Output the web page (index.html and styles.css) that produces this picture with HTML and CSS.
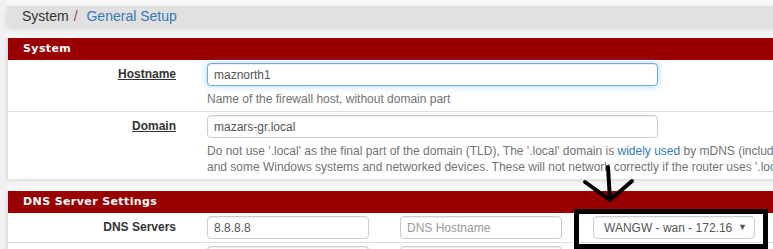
FILE: index.html
```html
<!DOCTYPE html>
<html lang="en">
<head>
  <meta charset="UTF-8" />
  <meta name="viewport" content="width=device-width, initial-scale=1.0"/>
  <title>System / General Setup</title>
  <link rel="stylesheet" href="styles.css">
</head>
<body>
  <div class="page">
    <div class="breadcrumb">
      <span class="crumb">System</span><span class="sep">/&nbsp;</span><a class="crumb-link" href="#">General Setup</a>
    </div>

    <div class="panel">
      <div class="panel-heading">System</div>
      <div class="form-row">
        <label class="form-label" for="hostname"><span class="label-link">Hostname</span></label>
        <div class="form-field">
          <input type="text" id="hostname" class="form-input is-focused" value="maznorth1">
          <p class="help">Name of the firewall host, without domain part</p>
        </div>
      </div>
      <div class="form-row">
        <label class="form-label" for="domain"><span class="label-link">Domain</span></label>
        <div class="form-field">
          <input type="text" id="domain" class="form-input" value="mazars-gr.local">
          <p class="help">Do not use '.local' as the final part of the domain (TLD), The '.local' domain is <a href="#">widely used</a> by mDNS (including avahi and Apple OS X's Bonjour/Rendezvous/Airprint/Airplay),<br>and some Windows systems and networked devices. These will not network correctly if the router uses '.local'. Alternatives such as '.home.arpa', '.local.lan', or '.mylocal' are safer.</p>
        </div>
      </div>
    </div>

    <div class="panel">
      <div class="panel-heading">DNS Server Settings</div>
      <div class="form-row dns-row">
        <label class="form-label">DNS Servers</label>
        <input type="text" class="form-input" value="8.8.8.8">
        <input type="text" class="form-input" placeholder="DNS Hostname">
        <div class="select-wrap">
          <select class="form-input form-select">
            <option>WANGW - wan - 172.16</option>
          </select>
        </div>
      </div>
      <div class="form-row dns-row">
        <label class="form-label"></label>
        <input type="text" class="form-input">
        <input type="text" class="form-input" placeholder="DNS Hostname">
        <div class="select-wrap">
          <select class="form-input form-select">
            <option>none</option>
          </select>
        </div>
      </div>
    </div>
  </div>

  <svg class="annotation" width="773" height="249" viewBox="0 0 773 249">
    <g fill="none" stroke="#000" stroke-width="4" stroke-linecap="round" stroke-linejoin="round">
      <path d="M608 167 L610 200"/>
      <path d="M585 182 L610 200 L632 181"/>
    </g>
    <rect x="576.5" y="211.5" width="189" height="35" fill="none" stroke="#000" stroke-width="5"/>
  </svg>
</body>
</html>
```

FILE: styles.css
```css
* { box-sizing: border-box; margin: 0; padding: 0; }
html, body { overflow: hidden; }
body {
  background: #f1f1f1;
  font-family: "Liberation Sans", Arial, sans-serif;
  color: #333;
  width: 773px;
  height: 249px;
  position: relative;
}
.page {
  width: 1000px;
  margin-left: 7px;
  padding-top: 6px;
  background: #f8f8f8;
  min-height: 249px;
}

/* breadcrumb bar */
.breadcrumb {
  background: #e0e0e0;
  height: 21px;
  line-height: 21px;
  padding-left: 15px;
  font-size: 14px;
  box-shadow: 0 3px 6px rgba(0,0,0,0.12);
  margin-bottom: 11px;
}
.crumb { color: #333; }
.sep { color: #a0403f; padding: 0 5px; }
.crumb-link { color: #337ab7; text-decoration: none; }

/* panels */
.panel {
  background: #fff;
  border-left: 1px solid #ddd;
  box-shadow: 0 2px 5px rgba(0,0,0,0.12);
  margin-bottom: 12px;
}
.panel-heading {
  background: #990000;
  color: #fff;
  height: 22px;
  line-height: 22px;
  padding-left: 15px;
  font-family: "DejaVu Sans", Verdana, sans-serif;
  font-weight: bold;
  font-size: 11px;
  letter-spacing: 0.4px;
}

/* form rows */
.form-row {
  display: grid;
  grid-template-columns: 168px 1fr;
  column-gap: 31px;
  align-items: start;
  padding: 3px 0 4px;
}
.form-row + .form-row { border-top: 1px solid #ddd; }
.form-label {
  text-align: right;
  font-size: 12px;
  font-weight: bold;
  line-height: 23px;
  color: #333;
}
.label-link { text-decoration: underline; }

.form-input {
  display: block;
  width: 451px;
  height: 23px;
  padding: 0 6px;
  font-family: "Liberation Sans", Arial, sans-serif;
  font-size: 12px;
  color: #555;
  background: #fff;
  border: 1px solid #ccc;
  border-radius: 4px;
  box-shadow: inset 0 1px 1px rgba(0,0,0,0.075);
  outline: none;
}
.form-input::placeholder { color: #999; }
.form-input.is-focused {
  border-color: #66afe9;
  box-shadow: inset 0 1px 1px rgba(0,0,0,0.075), 0 0 6px rgba(102,175,233,0.6);
}

.help {
  margin-top: 5px;
  font-size: 12px;
  line-height: 16px;
  color: #737373;
  white-space: nowrap;
}
.help a { color: #337ab7; text-decoration: none; }

/* dns servers row */
.dns-row {
  grid-template-columns: 168px 162px 162px 162px;
  padding-bottom: 3px;
}
.dns-row .form-input { width: 162px; }
.select-wrap { position: relative; }
.form-select {
  -webkit-appearance: none;
  appearance: none;
  padding-left: 10px;
}
.select-wrap::after {
  content: "\25BC";
  position: absolute;
  right: 8px;
  top: 0;
  line-height: 23px;
  font-size: 9px;
  color: #555;
}

/* annotation drawn over the screenshot */
.annotation {
  position: absolute;
  top: 0;
  left: 0;
  pointer-events: none;
}
```
